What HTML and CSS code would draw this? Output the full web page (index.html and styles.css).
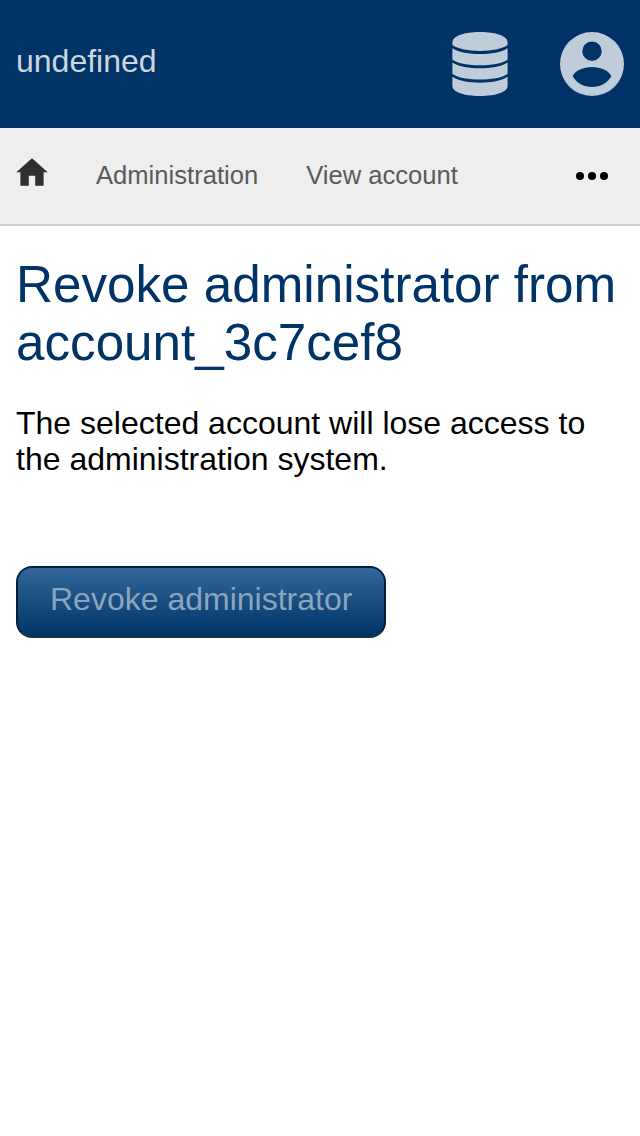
FILE: index.html
```html
<!DOCTYPE html>
<html lang="en">
<head>
<meta charset="utf-8">
<title>Revoke administrator</title>
<link rel="stylesheet" href="styles.css">
</head>
<body>
<header class="topbar">
  <span class="brand">undefined</span>
  <div class="topbar-actions">
    <svg class="icon-data" viewBox="0 0 64 64" aria-hidden="true">
      <path d="M4.400 10.500C4.400 4 16 0 32 0s27.600 4 27.600 10.500v2.500C54 17 44 18.900 32 18.900S10 17 4.400 13z"/>
      <path d="M4.400 16.200C11 20.500 21 22 32 22s21-1.500 27.600-5.800v11.500C54 31.500 43 33.200 32 33.200S10 31.500 4.400 27.700z"/>
      <path d="M4.400 30.500C11 34.800 21 36.300 32 36.300s21-1.500 27.600-5.800V42C54 45.800 43 47.600 32 47.600S10 45.800 4.400 42z"/>
      <path d="M4.400 44.800C11 49.100 21 50.700 32 50.700s21-1.600 27.600-5.900V54C59.600 60 48 64 32 64S4.400 60 4.400 54z"/>
    </svg>
    <svg class="icon-account" viewBox="0 0 64 64" aria-hidden="true">
      <path fill-rule="evenodd" d="M32 0a32 32 0 1 0 0 64a32 32 0 1 0 0-64zM32 9.500a9.700 9.700 0 1 1 0 19.400a9.700 9.700 0 1 1 0-19.400zM32 55C24 55 16.500 51 12.800 44.200C14.500 38.500 24 34.900 32 34.900S49.500 38.500 51.200 44.200C47.500 51 40 55 32 55z"/>
    </svg>
  </div>
</header>
<nav class="crumbs">
  <svg class="icon-home" viewBox="0 0 32 28" aria-hidden="true"><path d="M16 0.300L0.300 14.300h4.100v13.400h8.400V17.800h6.400v9.900h8.400V14.300h4.100z"/></svg>
  <span class="crumb">Administration</span>
  <span class="crumb">View account</span>
  <svg class="icon-more" viewBox="0 0 32 8" aria-hidden="true"><circle cx="4" cy="4" r="4"/><circle cx="16" cy="4" r="4"/><circle cx="28" cy="4" r="4"/></svg>
</nav>
<main class="content">
  <h1 class="title">Revoke administrator from account_3c7cef8</h1>
  <p class="message">The selected account will lose access to the administration system.</p>
  <button class="submit" disabled>Revoke administrator</button>
</main>
</body>
</html>
```
FILE: styles.css
```css
* { box-sizing: border-box; }
body {
  margin: 0;
  background: #fff;
  color: #000;
  font: 32px/36px "Liberation Sans", Arial, sans-serif;
}
.topbar {
  display: flex;
  align-items: center;
  justify-content: space-between;
  height: 128px;
  padding: 0 16px;
  background: #036;
}
.brand { padding-bottom: 6px; color: #ccd6dd; }
.topbar-actions { display: flex; gap: 48px; fill: #bfccd9; }
.icon-data, .icon-account { width: 64px; height: 64px; }
.crumbs {
  display: flex;
  align-items: center;
  height: 98px;
  padding: 0 32px 0 16px;
  border-bottom: 2px solid #ccc;
  background: #eee;
  color: #5a5a5a;
  font-size: 25.6px;
}
.icon-home { width: 32px; height: 28px; margin-bottom: 8px; fill: #2e2e2e; }
.crumb { margin-left: 48px; padding-bottom: 2px; }
.icon-more { width: 32px; height: 8px; margin-left: auto; }
.content { padding: 30px 16px; }
.title {
  margin: 0;
  color: #036;
  font-size: 51.2px;
  font-weight: 400;
  line-height: 58px;
}
.message { margin: 33px 0 89px; }
.submit {
  display: block;
  height: 72px;
  padding: 0 32px 7px;
  border: 2px solid #002040;
  border-bottom-color: #1a334d;
  border-radius: 16px;
  background: linear-gradient(#369, #036);
  color: #8ca5be;
  font: inherit;
}
```
